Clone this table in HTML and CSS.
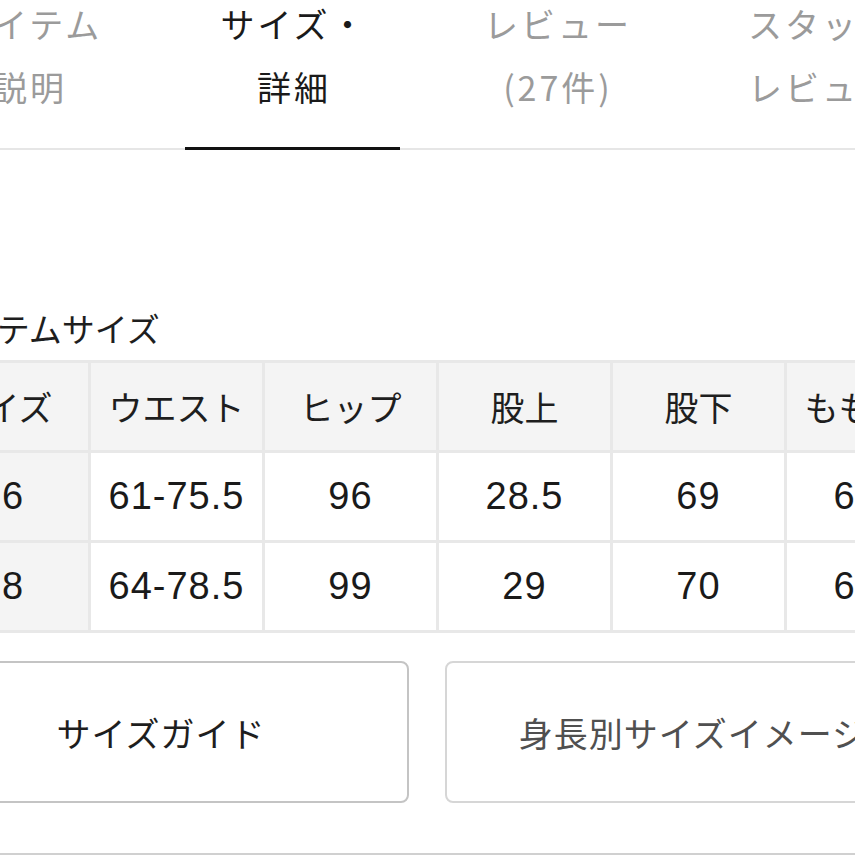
FILE: index.html
```html
<!DOCTYPE html>
<html lang="ja">
<head>
<meta charset="utf-8">
<link rel="stylesheet" href="styles.css">
</head>
<body>
<nav class="tabs">
  <div class="tab"><span>アイテム<br>説明</span></div>
  <div class="tab active"><span>サイズ・<br>詳細</span></div>
  <div class="tab"><span>レビュー<br>(27件)</span></div>
  <div class="tab"><span>スタッフ<br>レビュー</span></div>
</nav>
<main class="content">
  <h2 class="title">アイテムサイズ</h2>
  <table class="size-table">
    <colgroup>
      <col class="c-key"><col><col><col><col><col><col>
    </colgroup>
    <tr class="head">
      <th>サイズ</th><th>ウエスト</th><th>ヒップ</th><th>股上</th><th>股下</th><th>もも周り</th><th>すそ幅</th>
    </tr>
    <tr>
      <td class="key">36</td><td>61-75.5</td><td>96</td><td>28.5</td><td>69</td><td>64.5</td><td>40</td>
    </tr>
    <tr>
      <td class="key">38</td><td>64-78.5</td><td>99</td><td>29</td><td>70</td><td>66.5</td><td>41</td>
    </tr>
  </table>
  <div class="buttons">
    <button class="btn">サイズガイド</button>
    <button class="btn sub">身長別サイズイメージ</button>
  </div>
</main>
<div class="rule"></div>
</body>
</html>
```
FILE: styles.css
```css
html, body {
  margin: 0;
  padding: 0;
  background: #fff;
}
body {
  width: 855px;
  height: 855px;
  overflow: hidden;
  font-family: "Liberation Sans", "Noto Sans CJK JP", sans-serif;
  color: #1e1e1e;
  position: relative;
}
.tabs {
  display: flex;
  margin-left: -102px;
  width: 1100px;
  height: 150px;
  border-bottom: 2px solid #e6e6e6;
  box-sizing: border-box;
}
.tab {
  flex: 0 0 264px;
  position: relative;
  display: flex;
  justify-content: center;
}
.tab span {
  display: block;
  white-space: nowrap;
  margin-top: -8px;
  text-align: center;
  font-family: "Noto Sans CJK JP", sans-serif;
  font-size: 34px;
  line-height: 63px;
  letter-spacing: 3px;
  color: #9b9b9b;
}
.tab.active span { color: #1a1a1a; }
.tab.active::after {
  content: "";
  position: absolute;
  left: 50%;
  bottom: -2px;
  width: 215px;
  margin-left: -109px;
  height: 3px;
  background: #111;
}
.content {
  margin-left: -87px;
  width: 1220px;
}
.title {
  margin: 156px 0 0 20px;
  height: 54px;
  font-family: "Noto Sans CJK JP", sans-serif;
  font-weight: normal;
  font-size: 33px;
  line-height: 44px;
  color: #1e1e1e;
}
.size-table {
  border-collapse: collapse;
  table-layout: fixed;
  width: 1219px;
}
.size-table col { width: 174px; }
.size-table col.c-key { width: 175px; }
.size-table th,
.size-table td {
  height: 87px;
  padding: 0;
  border: 3px solid #e8e8e8;
  text-align: center;
  vertical-align: middle;
  white-space: nowrap;
}
.size-table th {
  background: #f4f4f4;
  font-family: "Noto Sans CJK JP", sans-serif;
  font-weight: normal;
  font-size: 34px;
  color: #1e1e1e;
}
.size-table td {
  font-size: 38px;
  letter-spacing: 1px;
  color: #1a1a1a;
}
.size-table td.key { background: #f4f4f4; }
.buttons {
  display: flex;
  gap: 36px;
  margin-top: 28px;
}
.btn {
  flex: 0 0 496px;
  height: 142px;
  background: #fff;
  border: 2px solid #c4c4c4;
  border-radius: 8px;
  font-family: "Noto Sans CJK JP", sans-serif;
  font-size: 34px;
  letter-spacing: 1px;
  color: #1e1e1e;
  padding: 0;
}
.btn.sub {
  border-color: #d6d6d6;
  color: #505050;
}
.rule {
  position: absolute;
  left: 0;
  right: 0;
  bottom: 0;
  height: 2px;
  background: #d0d0d0;
}
```
